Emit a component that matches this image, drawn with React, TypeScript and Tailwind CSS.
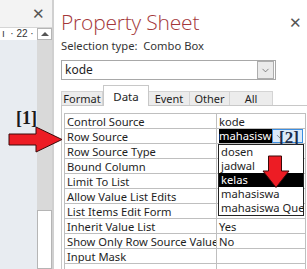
import { ChevronDown } from 'lucide-react';

const rows: [string, string][] = [
  ['Control Source', 'kode'],
  ['Row Source', ''],
  ['Row Source Type', ''],
  ['Bound Column', ''],
  ['Limit To List', ''],
  ['Allow Value List Edits', ''],
  ['List Items Edit Form', ''],
  ['Inherit Value List', 'Yes'],
  ['Show Only Row Source Value', 'No'],
  ['Input Mask', ''],
  ['', ''],
];

const tabs = ['Format', 'Data', 'Event', 'Other', 'All'];
const tabWidths = ['w-[42px]', 'w-[46px]', 'w-[42px]', 'w-[41px]', 'w-[44px]'];

const listItems = ['dosen', 'jadwal', 'kelas', 'mahasiswa', 'mahasiswa Query'];

function RedArrowRight() {
  return (
    <svg className="absolute left-[8px] top-[126px]" width="56" height="27" viewBox="0 0 56 27">
      <polygon
        points="1,8 28,8 28,1 54,13.5 28,26 28,19 1,19"
        fill="#ed1c24"
        stroke="#3a0a0a"
        strokeWidth="1"
      />
    </svg>
  );
}

function RedArrowDown() {
  return (
    <svg className="absolute left-[262px] top-[155px]" width="29" height="34" viewBox="0 0 29 34">
      <polygon
        points="6.5,1 19.5,1 19.5,16 27,16 14,32.5 1,16 6.5,16"
        fill="#ed1c24"
        stroke="#3a0a0a"
        strokeWidth="1"
      />
    </svg>
  );
}

export default function App() {
  return (
    <div className="relative w-[307px] h-[269px] overflow-hidden flex bg-white font-['Noto_Sans',sans-serif] text-[#1e1e1e]">
      {/* left document pane */}
      <div className="w-[52px] flex flex-col bg-[#e8ecf1]">
        <div className="h-[28px] bg-[#f3f3f3] border-b border-[#d5d5d5] flex items-center justify-end pr-[7px] text-[#555] text-[15px] leading-none">
          ✕
        </div>
        <div className="h-[12px] flex">
          <div className="flex-1 bg-white text-[10px] leading-[12px] text-[#333] whitespace-nowrap overflow-hidden pl-[2px] font-['Liberation_Sans',sans-serif]">
            ı&nbsp;&nbsp;·&nbsp;22&nbsp;·
          </div>
          <div className="w-[15px] bg-white border border-[#b5b5b5] flex items-center justify-center">
            <div className="w-0 h-0 border-l-[4px] border-r-[4px] border-b-[4px] border-l-transparent border-r-transparent border-b-[#555]" />
          </div>
        </div>
        <div className="flex-1 flex">
          <div className="flex-1 bg-[#e8ecf1]" />
          <div className="w-[15px] bg-[#d9d9d9] flex flex-col justify-end">
            <div className="h-[59px] bg-white border border-[#b5b5b5]" />
          </div>
        </div>
      </div>
      <div className="w-[2px] bg-[#d0d0d0]" />

      {/* property sheet */}
      <div className="flex-1 flex flex-col pl-[7px] pt-[7px]">
        <div className="flex items-start justify-between pr-[5px]">
          <div className="text-[21px] leading-[30px] font-light text-[#a4373a] font-['Open_Sans',sans-serif] tracking-[-0.2px]">
            Property Sheet
          </div>
          <div className="text-[15px] leading-none text-[#555] mt-[8px]">✕</div>
        </div>
        <div className="text-[11.2px] leading-[14px] mt-[2px] text-[#333]">
          Selection type:&nbsp;&nbsp;Combo Box
        </div>
        <div className="mt-[7px] w-[215px] h-[23px] border border-[#a8a8a8] bg-white flex items-center justify-between pl-[3px] pr-[1px]">
          <span className="text-[12px]">kode</span>
          <div className="w-[17px] h-[18px] border border-[#adadad] bg-[#eaeaea] flex items-center justify-center">
            <ChevronDown size={11} strokeWidth={1.5} color="#555" />
          </div>
        </div>

        {/* tabs */}
        <div className="mt-[5px] flex items-end h-[20px]">
          {tabs.map((t, i) => (
            <div
              key={t}
              className={
                t === 'Data'
                  ? `${tabWidths[i]} h-[21px] bg-white border border-b-0 border-[#c8c8c8] text-[11.5px] leading-[15px] flex items-start justify-center pt-[3px] -mb-px z-10`
                  : `${tabWidths[i]} h-[14px] bg-[#ececec] border border-b-0 border-[#d4d4d4] -ml-px first:ml-0 text-[11px] leading-[13px] flex justify-center`
              }
            >
              {t}
            </div>
          ))}
        </div>

        {/* grid */}
        <div className="border-t border-l border-[#c8c8c8] pt-[7px] pl-[2px] pr-[1px] flex-1">
          <div className="border-t border-l border-r border-[#bfbfbf] text-[11.2px] leading-[15px]">
            {rows.map(([k, v], i) => (
              <div key={i} className="flex h-[15px] border-b border-[#bfbfbf]">
                <div className="w-[152px] border-r border-[#bfbfbf] pl-[2px] whitespace-nowrap overflow-hidden">{k}</div>
                <div className="flex-1 pl-[2px] whitespace-nowrap overflow-hidden">
                  {k === 'Row Source' ? (
                    <div className="flex h-full">
                      <span className="bg-black text-white pr-[1px] leading-[14px]">mahasisw</span>
                      <div className="w-[31px] h-[14px] border border-[#3c8ee0] bg-[#dbeaf9] flex items-center pl-[2px]">
                        <ChevronDown size={9} strokeWidth={1.5} color="#333" />
                      </div>
                    </div>
                  ) : (
                    v
                  )}
                </div>
              </div>
            ))}
          </div>
        </div>
      </div>

      {/* open dropdown list */}
      <div className="absolute left-[218px] top-[144px] w-[86px] border border-[#222] bg-white text-[11.2px] leading-[14px] font-['Noto_Sans',sans-serif] overflow-hidden">
        {listItems.map((it) => (
          <div
            key={it}
            className={
              it === 'kelas'
                ? 'bg-black text-white pl-[2px] whitespace-nowrap'
                : 'pl-[2px] whitespace-nowrap'
            }
          >
            {it}
          </div>
        ))}
      </div>

      <RedArrowRight />
      <RedArrowDown />

      <div className="absolute left-[16px] top-[108px] font-['Liberation_Serif',serif] font-bold text-[18px] leading-[20px] text-[#1a1a1a]">
        [1]
      </div>
      <div className="absolute left-[279px] top-[129px] font-['Liberation_Serif',serif] font-bold text-[17px] leading-[18px] text-[#1a2a4a]">
        [2]
      </div>
    </div>
  );
}
